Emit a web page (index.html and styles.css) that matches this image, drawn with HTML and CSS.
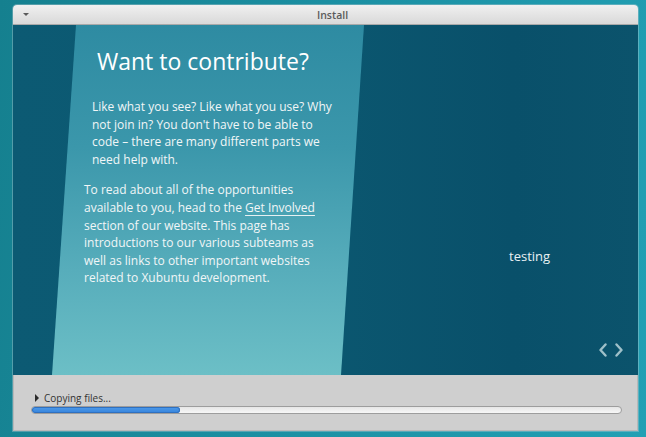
FILE: index.html
```html
<!DOCTYPE html>
<html>
<head>
<meta charset="utf-8">
<link rel="stylesheet" href="styles.css">
</head>
<body>
<div class="window">
  <div class="titlebar">
    <span class="menu-btn"></span>
    <span class="title">Install</span>
  </div>
  <div class="slideshow">
    <div class="slide-text">
      <h1 class="heading">Want to contribute?</h1>
      <p class="para para-first">Like what you see? Like what you use? Why not join in? You don't have to be able to code – there are many different parts we need help with.</p>
      <p class="para para-second">To read about all of the opportunities available to you, head to the <span class="link">Get Involved</span> section of our website. This page has introductions to our various subteams as well as links to other important websites related to Xubuntu development.</p>
    </div>
    <div class="slide-side">
      <div class="testing">testing</div>
      <div class="nav">
        <svg class="chev" width="10" height="14" viewBox="0 0 10 14"><path d="M7.5 1.5 L2.5 7 L7.5 12.5" fill="none" stroke="#9fc0c9" stroke-width="2.4" stroke-linecap="round" stroke-linejoin="round"/></svg>
        <svg class="chev" width="10" height="14" viewBox="0 0 10 14"><path d="M2.5 1.5 L7.5 7 L2.5 12.5" fill="none" stroke="#9fc0c9" stroke-width="2.4" stroke-linecap="round" stroke-linejoin="round"/></svg>
      </div>
    </div>
  </div>
  <div class="footer">
    <div class="status"><span class="expander"></span><span class="status-text">Copying files...</span></div>
    <div class="progress"><div class="progress-fill" style="width:148px"></div></div>
  </div>
</div>
</body>
</html>
```

FILE: styles.css
```css
html, body {
  margin: 0;
  padding: 0;
}
body {
  width: 646px;
  height: 437px;
  overflow: hidden;
  background: linear-gradient(100deg, #15808f 0%, #1b8fa2 45%, #22a0b4 100%);
  font-family: "Open Sans", "Noto Sans", sans-serif;
}
.window {
  margin: 5px 0 0 13px;
  width: 625px;
  height: 426px;
  display: flex;
  flex-direction: column;
  border-radius: 4px 4px 0 0;
  box-shadow: 0 0 0 1px rgba(200, 210, 214, 0.35);
}
.titlebar {
  height: 19px;
  border-bottom: 1px solid #a9a9a9;
  border-radius: 4px 4px 0 0;
  background: linear-gradient(#f0f0f0, #d9d9d9);
  display: flex;
  align-items: center;
}
.menu-btn {
  margin-left: 10px;
  width: 0;
  height: 0;
  border-left: 3px solid transparent;
  border-right: 3px solid transparent;
  border-top: 3px solid #5a5a5a;
}
.title {
  margin-left: 288px;
  font-size: 10.5px;
  font-weight: 600;
  color: #5b5b5b;
}
.slideshow {
  height: 350px;
  position: relative;
  display: grid;
  grid-template-columns: 340px 1fr;
  background: linear-gradient(90deg, #0c5a73 0%, #0b5770 50%, #09506a 80%, #0b536c 100%);
  overflow: hidden;
}
.slideshow::before {
  content: "";
  position: absolute;
  left: 0;
  top: 0;
  width: 100%;
  height: 100%;
  background: linear-gradient(180deg, #2e8ba2 0%, #3b97ab 35%, #57adbb 70%, #6cbfc6 100%);
  clip-path: polygon(63px 0, 351px 0, 328px 350px, 39px 350px);
}
.slide-text {
  position: relative;
  color: #f1f6f7;
  padding-top: 21px;
}
.heading {
  margin: 0 0 0 84px;
  font-weight: 400;
  font-size: 23px;
  line-height: 30px;
  color: #ffffff;
}
.para {
  margin: 0;
  font-size: 12px;
  line-height: 17.6px;
}
.para-first {
  margin: 22px 0 0 79px;
  width: 250px;
}
.para-second {
  margin: 13px 0 0 71px;
  width: 250px;
}
.link {
  text-decoration: underline;
  text-decoration-color: #e6f0f2;
  text-underline-offset: 3px;
  text-decoration-thickness: 1px;
}
.slide-side {
  position: relative;
  display: flex;
  flex-direction: column;
  padding: 222px 0 0 156px;
}
.testing {
  color: #e9f1f3;
  font-size: 13px;
  line-height: 18px;
}
.nav {
  margin-top: 78px;
  margin-left: 89px;
  display: flex;
  gap: 6px;
}
.chev {
  display: block;
}
.footer {
  flex: 1;
  background: #cfcfcf;
  border: 1px solid #b8b8b8;
  border-top: none;
  padding: 15px 15px 0 17px;
}
.status {
  display: flex;
  align-items: center;
  height: 16px;
  margin-left: 4px;
}
.expander {
  width: 0;
  height: 0;
  border-top: 4px solid transparent;
  border-bottom: 4px solid transparent;
  border-left: 4px solid #2a2a2a;
  margin-right: 5px;
}
.status-text {
  font-size: 10px;
  color: #333333;
}
.progress {
  height: 6px;
  border: 1px solid #9d9d9d;
  border-radius: 4px;
  background: linear-gradient(#e6e6e6, #f7f7f7);
  overflow: hidden;
}
.progress-fill {
  height: 100%;
  background: linear-gradient(#4f9bea, #3583dc);
  box-shadow: inset 0 0 0 1px #2f70c0;
  border-radius: 3px;
}
```
